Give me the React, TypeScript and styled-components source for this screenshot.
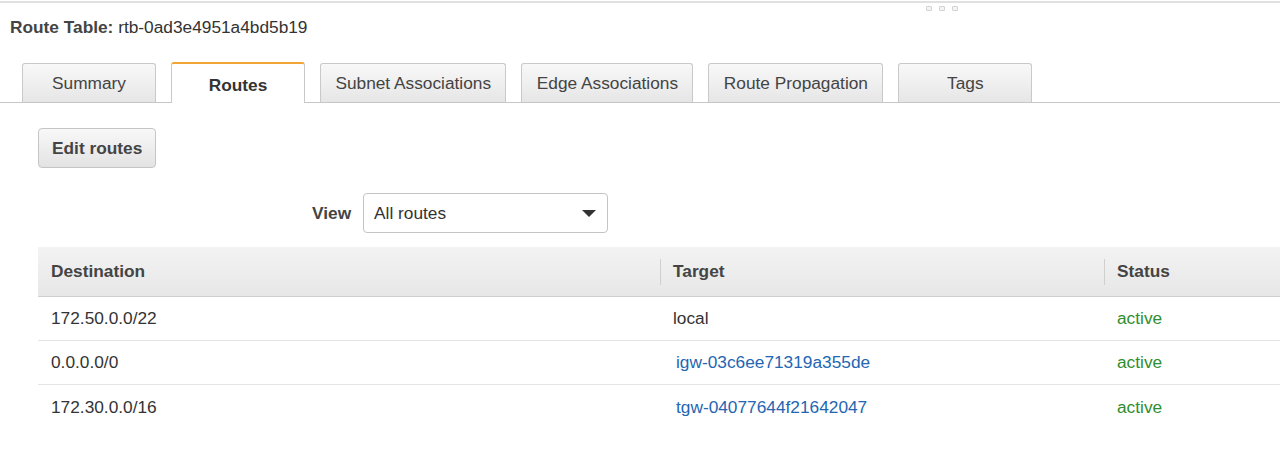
import React from "react";
import styled, { createGlobalStyle, css } from "styled-components";

const Global = createGlobalStyle`
  html, body { margin: 0; padding: 0; background: #fff; }
  body {
    font-family: "Liberation Sans", Arial, Helvetica, sans-serif;
    color: #333;
    font-size: 17.3px;
  }
  * { box-sizing: border-box; }
`;

const Page = styled.div`
  width: 1280px;
  height: 452px;
  overflow: hidden;
`;

const Splitter = styled.div`
  margin-top: 1px;
  height: 14px;
  border-top: 2px solid #e0e0e0;
  display: flex;
  gap: 7px;
  padding: 3px 0 0 926px;
`;

const Grip = styled.span`
  width: 6px;
  height: 5px;
  border: 1px solid #d2d2d2;
  border-radius: 1px;
  background: #f4f4f4;
`;

const Title = styled.div`
  height: 24px;
  line-height: 24px;
  padding-left: 10px;
  margin-bottom: 23px;
  color: #333;
`;

const TitleLabel = styled.span`
  font-weight: bold;
  color: #444;
`;

const TabBar = styled.div`
  display: flex;
  align-items: flex-end;
  gap: 15px;
  padding-left: 22px;
  height: 41px;
  border-bottom: 1px solid #c6c6c6;
`;

const Tab = styled.div<{ $active?: boolean }>`
  height: 39px;
  min-width: 134px;
  padding: 0 14.4px;
  display: flex;
  align-items: center;
  justify-content: center;
  border: 1px solid #c9c9c9;
  border-bottom: none;
  border-radius: 3px 3px 0 0;
  background: linear-gradient(#f8f8f8, #e6e6e6);
  color: #444;
  white-space: nowrap;
  ${(p) =>
    p.$active &&
    css`
      height: 41px;
      margin-bottom: -1px;
      padding-top: 4px;
      background: #fff;
      border-top: 2px solid #f0a535;
      font-weight: bold;
      color: #333;
    `}
`;

const Content = styled.div`
  padding: 25px 0 0 38px;
`;

const Button = styled.button`
  height: 40px;
  padding: 1px 13px 0;
  font: bold 17.3px "Liberation Sans", Arial, sans-serif;
  color: #444;
  background: linear-gradient(#f8f8f8, #e3e3e3);
  border: 1px solid #c5c5c5;
  border-radius: 4px;
  cursor: pointer;
`;

const FilterRow = styled.div`
  margin-top: 25px;
  display: flex;
  align-items: center;
  gap: 12px;
  padding-left: 274px;
`;

const FilterLabel = styled.span`
  font-weight: bold;
  color: #444;
`;

const Select = styled.div`
  width: 245px;
  height: 40px;
  border: 1px solid #c4c4c4;
  border-radius: 4px;
  display: flex;
  align-items: center;
  justify-content: space-between;
  padding: 0 11px 0 10px;
  color: #333;
  background: #fff;
`;

const Caret = styled.span`
  width: 0;
  height: 0;
  border-left: 7px solid transparent;
  border-right: 7px solid transparent;
  border-top: 7px solid #333;
`;

const Table = styled.div`
  margin-top: 14px;
  display: grid;
  grid-template-columns: 622px 444px 1fr;
`;

const HeadCell = styled.div<{ $sep?: boolean }>`
  height: 50px;
  display: flex;
  align-items: center;
  padding-left: 13px;
  font-weight: bold;
  color: #444;
  background: linear-gradient(#f3f3f3, #e7e7e7);
  border-bottom: 1px solid #cfcfcf;
  position: relative;
  ${(p) =>
    p.$sep &&
    css`
      &::before {
        content: "";
        position: absolute;
        left: 0;
        top: 12px;
        height: 26px;
        width: 1px;
        background: #cfcfcf;
      }
    `}
`;

const Cell = styled.div<{ $last?: boolean }>`
  height: 44px;
  display: flex;
  align-items: center;
  padding-left: 13px;
  color: #333;
  border-bottom: ${(p) => (p.$last ? "none" : "1px solid #e4e4e4")};
`;

const Link = styled.a`
  color: #2466b2;
  text-decoration: none;
  margin-left: 3px;
`;

const Status = styled.span`
  color: #2f8e2f;
`;

const tabs = [
  "Summary",
  "Routes",
  "Subnet Associations",
  "Edge Associations",
  "Route Propagation",
  "Tags",
];

const routes = [
  { dest: "172.50.0.0/22", target: "local", link: false },
  { dest: "0.0.0.0/0", target: "igw-03c6ee71319a355de", link: true },
  { dest: "172.30.0.0/16", target: "tgw-04077644f21642047", link: true },
];

export default function App() {
  return (
    <Page>
      <Global />
      <Splitter>
        <Grip />
        <Grip />
        <Grip />
      </Splitter>
      <Title>
        <TitleLabel>Route Table:</TitleLabel> rtb-0ad3e4951a4bd5b19
      </Title>
      <TabBar>
        {tabs.map((t) => (
          <Tab key={t} $active={t === "Routes"}>
            {t}
          </Tab>
        ))}
      </TabBar>
      <Content>
        <Button>Edit routes</Button>
        <FilterRow>
          <FilterLabel>View</FilterLabel>
          <Select>
            <span>All routes</span>
            <Caret />
          </Select>
        </FilterRow>
        <Table>
          <HeadCell>Destination</HeadCell>
          <HeadCell $sep>Target</HeadCell>
          <HeadCell $sep>Status</HeadCell>
          {routes.map((r, i) => {
            const last = i === routes.length - 1;
            return (
              <React.Fragment key={r.dest}>
                <Cell $last={last}>{r.dest}</Cell>
                <Cell $last={last}>
                  {r.link ? <Link href="#">{r.target}</Link> : r.target}
                </Cell>
                <Cell $last={last}>
                  <Status>active</Status>
                </Cell>
              </React.Fragment>
            );
          })}
        </Table>
      </Content>
    </Page>
  );
}
